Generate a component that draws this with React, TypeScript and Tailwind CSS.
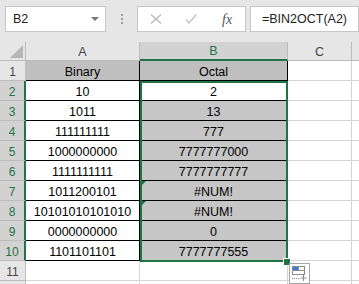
const rows: [string, string][] = [
  ['Binary', 'Octal'],
  ['10', '2'],
  ['1011', '13'],
  ['111111111', '777'],
  ['1000000000', '7777777000'],
  ['1111111111', '7777777777'],
  ['1011200101', '#NUM!'],
  ['10101010101010', '#NUM!'],
  ['0000000000', '0'],
  ['1101101101', '7777777555'],
]

function ErrorMark() {
  return (
    <svg className="absolute left-[1px] top-0" width="5" height="5" viewBox="0 0 5 5">
      <polygon points="0,0 5,0 0,5" fill="#1e7145" />
    </svg>
  )
}

export default function App() {
  return (
    <div className="relative w-[359px] h-[284px] overflow-hidden bg-white font-['Liberation_Sans',Arial,sans-serif] text-[12.5px] text-black">
      {/* formula bar */}
      <div className="flex h-[42px] bg-[#e6e6e6] pt-[6px]">
        <div className="ml-[5px] flex h-[26px] w-[102px] items-center justify-between border border-[#c6c6c6] bg-white pl-[7px] pr-[6px] text-[#222]">
          <span>B2</span>
          <span className="h-0 w-0 border-x-[4px] border-t-[4px] border-x-transparent border-t-[#777]" />
        </div>
        <div className="flex h-[26px] w-[31px] flex-col items-center justify-center gap-[2px]">
          <span className="h-[2px] w-[2px] bg-[#a0a0a0]" />
          <span className="h-[2px] w-[2px] bg-[#a0a0a0]" />
          <span className="h-[2px] w-[2px] bg-[#a0a0a0]" />
        </div>
        <div className="flex h-[26px] w-[109px] items-center border border-[#c6c6c6] bg-white">
          <div className="flex w-[36px] justify-center">
            <svg width="12" height="10" viewBox="0 0 12 10">
              <path d="M1 0.5 L11 9.5 M11 0.5 L1 9.5" stroke="#b8b8b8" strokeWidth="1.3" fill="none" />
            </svg>
          </div>
          <div className="flex w-[36px] justify-center">
            <svg width="12" height="10" viewBox="0 0 12 10">
              <path d="M0.8 5.5 L4 9 L11.2 0.8" stroke="#c0c0c0" strokeWidth="1.3" fill="none" />
            </svg>
          </div>
          <div className="flex w-[36px] justify-center font-['Liberation_Serif',serif] text-[14px] italic text-[#555]">
            fx
          </div>
        </div>
        <div className="ml-[4px] flex h-[26px] w-[110px] items-center border border-[#c6c6c6] bg-white pl-[11px] text-[#222]">
          =BIN2OCT(A2)
        </div>
      </div>

      {/* column headers */}
      <div className="flex h-[19px] bg-[#e6e6e6] text-[#444]">
        <div className="relative w-[26px] border-r border-b border-[#bcbcbc]">
          <svg className="absolute right-[2px] bottom-[2px]" width="13" height="13" viewBox="0 0 13 13">
            <polygon points="13,0 13,13 0,13" fill="#b6b6b6" />
          </svg>
        </div>
        <div className="w-[114px] border-r border-b border-[#bcbcbc] pt-[2px] text-center leading-[16px]">A</div>
        <div className="w-[148px] border-r border-[#bcbcbc] border-b-2 border-b-[#217346] bg-[#d2d2d2] pt-[2px] text-center leading-[15px] text-[#217346]">
          B
        </div>
        <div className="w-[64px] border-r border-b border-[#bcbcbc] pt-[2px] text-center leading-[16px]">C</div>
        <div className="flex-1 border-b border-[#bcbcbc]" />
      </div>

      {/* grid rows */}
      {rows.map(([a, b], i) => {
        const n = i + 1
        const sel = n >= 2
        const bBg = n === 1 ? 'bg-[#bfbfbf]' : n === 2 ? 'bg-white' : 'bg-[#c6c6c6]'
        return (
          <div key={n} className="flex h-[20px]">
            <div
              className={
                sel
                  ? 'w-[26px] border-b border-b-[#bcbcbc] border-r-2 border-r-[#217346] bg-[#d2d2d2] pt-[3px] text-center text-[12px] leading-[16px] text-[#217346]'
                  : 'w-[26px] border-b border-r border-[#bcbcbc] bg-[#e6e6e6] pt-[3px] text-center text-[12px] leading-[16px] text-[#444]'
              }
            >
              {n}
            </div>
            <div
              className={
                'w-[114px] border-r border-b border-black pt-[3px] text-center leading-[16px] ' +
                (n === 1 ? 'bg-[#bfbfbf]' : 'bg-white')
              }
            >
              {a}
            </div>
            <div className={'relative w-[148px] border-r border-b border-black pt-[3px] text-center leading-[16px] ' + bBg}>
              {(n === 7 || n === 8) && <ErrorMark />}
              {b}
            </div>
            <div className="w-[64px] border-r border-b border-[#d4d4d4]" />
            <div className="flex-1 border-b border-[#d4d4d4]" />
          </div>
        )
      })}

      {/* row 11 */}
      <div className="flex h-[20px]">
        <div className="w-[26px] border-b border-r border-[#bcbcbc] bg-[#e6e6e6] pt-[3px] text-center text-[12px] leading-[16px] text-[#444]">
          11
        </div>
        <div className="w-[114px] border-r border-b border-[#d4d4d4]" />
        <div className="w-[148px] border-r border-b border-[#d4d4d4]" />
        <div className="w-[64px] border-r border-b border-[#d4d4d4]" />
        <div className="flex-1 border-b border-[#d4d4d4]" />
      </div>
      <div className="flex h-[20px]">
        <div className="w-[26px] border-r border-[#bcbcbc] bg-[#e6e6e6]" />
        <div className="w-[114px] border-r border-[#d4d4d4]" />
        <div className="w-[148px] border-r border-[#d4d4d4]" />
        <div className="w-[64px] border-r border-[#d4d4d4]" />
      </div>

      {/* selection B2:B10 */}
      <div className="absolute left-[140px] top-[81px] h-[181px] w-[148px] border-2 border-[#217346]" />
      <div className="absolute left-[283px] top-[258px] h-[8px] w-[8px] border border-white bg-[#217346]" />

      {/* quick analysis */}
      <svg className="absolute left-[289px] top-[263px]" width="21" height="21" viewBox="0 0 21 21">
        <rect x="0.5" y="0.5" width="20" height="20" fill="white" stroke="#a6a6a6" />
        <rect x="4" y="3.5" width="5" height="3.5" fill="#3c7be0" />
        <rect x="3.5" y="3.5" width="12" height="8" fill="none" stroke="#8a8a8a" />
        <path d="M3.5 7.5 H15.5 M9.5 3.5 V7.5" stroke="#8a8a8a" fill="none" />
        <path d="M3 15.5 H4 M5 15.5 H6 M7 15.5 H8 M9 15.5 H10" stroke="#8a8a8a" fill="none" />
        <path d="M14.5 12 V18 M11.5 15 H17.5" stroke="#8a8a8a" fill="none" />
      </svg>
    </div>
  )
}
